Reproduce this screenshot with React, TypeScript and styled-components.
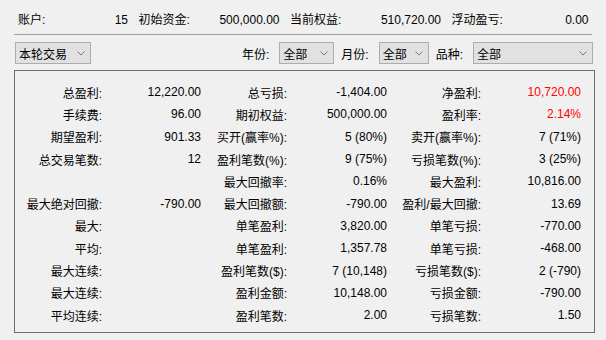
import React from "react"
import styled, { createGlobalStyle } from "styled-components"

const GlobalStyle = createGlobalStyle`
  html, body {
    margin: 0;
    padding: 0;
    background: #f0f0f0;
  }
`

const Window = styled.div`
  width: 606px;
  height: 340px;
  background: #f0f0f0;
  color: #000;
  font-family: "Liberation Sans", "Noto Sans CJK SC", sans-serif;
  font-size: 12px;
  overflow: hidden;
  display: flex;
  flex-direction: column;
`

const InfoBar = styled.div`
  display: grid;
  grid-template-columns: 110px 141px 151px 137px;
  column-gap: 10.5px;
  padding: 13px 0 0 18px;
  height: 21px;
  line-height: 14px;
`

const InfoCell = styled.div`
  display: flex;
  justify-content: space-between;
  white-space: nowrap;
`

const Rule = styled.div`
  height: 1px;
  margin: 0 14px;
  background: #a0a0a0;
`

const FilterBar = styled.div`
  display: flex;
  align-items: center;
  height: 22px;
  margin-top: 7px;
  padding: 0 13px 0 15px;
`

const Spacer = styled.div`
  flex: 1;
`

const FilterLabel = styled.span`
  margin-right: 10px;
  white-space: nowrap;
`

const Combo = styled.div<{ $width: number; $last?: boolean }>`
  box-sizing: border-box;
  width: ${(p) => p.$width}px;
  height: 22px;
  margin-right: ${(p) => (p.$last ? 0 : 7)}px;
  padding: 0 5px 0 3px;
  display: flex;
  align-items: center;
  justify-content: space-between;
  background: #e1e1e1;
  border: 1px solid #adadad;
  white-space: nowrap;
`

const Chevron = () => (
  <svg width="8" height="5" viewBox="0 0 8 5">
    <polyline points="0.5,0.5 4,4 7.5,0.5" fill="none" stroke="#7a7a7a" strokeWidth="1" />
  </svg>
)

const Panel = styled.div`
  box-sizing: border-box;
  height: 263px;
  margin: 6px 11px 0 14px;
  padding: 10px 0 0 1px;
  border: 1px solid #6e6e6e;
  display: grid;
  grid-template-columns: 86px 99px 86px 100px 94px 100px;
  grid-auto-rows: 22.3px;
  align-items: center;
`

const Label = styled.div`
  text-align: right;
  white-space: nowrap;
`

const Value = styled.div<{ $red?: boolean }>`
  text-align: right;
  white-space: nowrap;
  color: ${(p) => (p.$red ? "#ff0000" : "#000")};
`

type Cell = [string, string, boolean?]

const rows: Cell[][] = [
  [["总盈利:", "12,220.00"], ["总亏损:", "-1,404.00"], ["净盈利:", "10,720.00", true]],
  [["手续费:", "96.00"], ["期初权益:", "500,000.00"], ["盈利率:", "2.14%", true]],
  [["期望盈利:", "901.33"], ["买开(赢率%):", "5 (80%)"], ["卖开(赢率%):", "7 (71%)"]],
  [["总交易笔数:", "12"], ["盈利笔数(%):", "9 (75%)"], ["亏损笔数(%):", "3 (25%)"]],
  [["", ""], ["最大回撤率:", "0.16%"], ["最大盈利:", "10,816.00"]],
  [["最大绝对回撤:", "-790.00"], ["最大回撤额:", "-790.00"], ["盈利/最大回撤:", "13.69"]],
  [["最大:", ""], ["单笔盈利:", "3,820.00"], ["单笔亏损:", "-770.00"]],
  [["平均:", ""], ["单笔盈利:", "1,357.78"], ["单笔亏损:", "-468.00"]],
  [["最大连续:", ""], ["盈利笔数($):", "7 (10,148)"], ["亏损笔数($):", "2 (-790)"]],
  [["最大连续:", ""], ["盈利金额:", "10,148.00"], ["亏损金额:", "-790.00"]],
  [["平均连续:", ""], ["盈利笔数:", "2.00"], ["亏损笔数:", "1.50"]],
]

const info = [
  ["账户:", "15"],
  ["初始资金:", "500,000.00"],
  ["当前权益:", "510,720.00"],
  ["浮动盈亏:", "0.00"],
]

export default function App() {
  return (
    <Window>
      <GlobalStyle />
      <InfoBar>
        {info.map(([k, v]) => (
          <InfoCell key={k}>
            <span>{k}</span>
            <span>{v}</span>
          </InfoCell>
        ))}
      </InfoBar>
      <Rule />
      <FilterBar>
        <Combo $width={76}>
          <span>本轮交易</span>
          <Chevron />
        </Combo>
        <Spacer />
        <FilterLabel>年份:</FilterLabel>
        <Combo $width={55}>
          <span>全部</span>
          <Chevron />
        </Combo>
        <FilterLabel>月份:</FilterLabel>
        <Combo $width={50}>
          <span>全部</span>
          <Chevron />
        </Combo>
        <FilterLabel>品种:</FilterLabel>
        <Combo $width={120} $last>
          <span>全部</span>
          <Chevron />
        </Combo>
      </FilterBar>
      <Panel>
        {rows.map((row, i) =>
          row.map(([label, value, red], j) => (
            <React.Fragment key={`${i}-${j}`}>
              <Label>{label}</Label>
              <Value $red={red}>{value}</Value>
            </React.Fragment>
          ))
        )}
      </Panel>
    </Window>
  )
}
